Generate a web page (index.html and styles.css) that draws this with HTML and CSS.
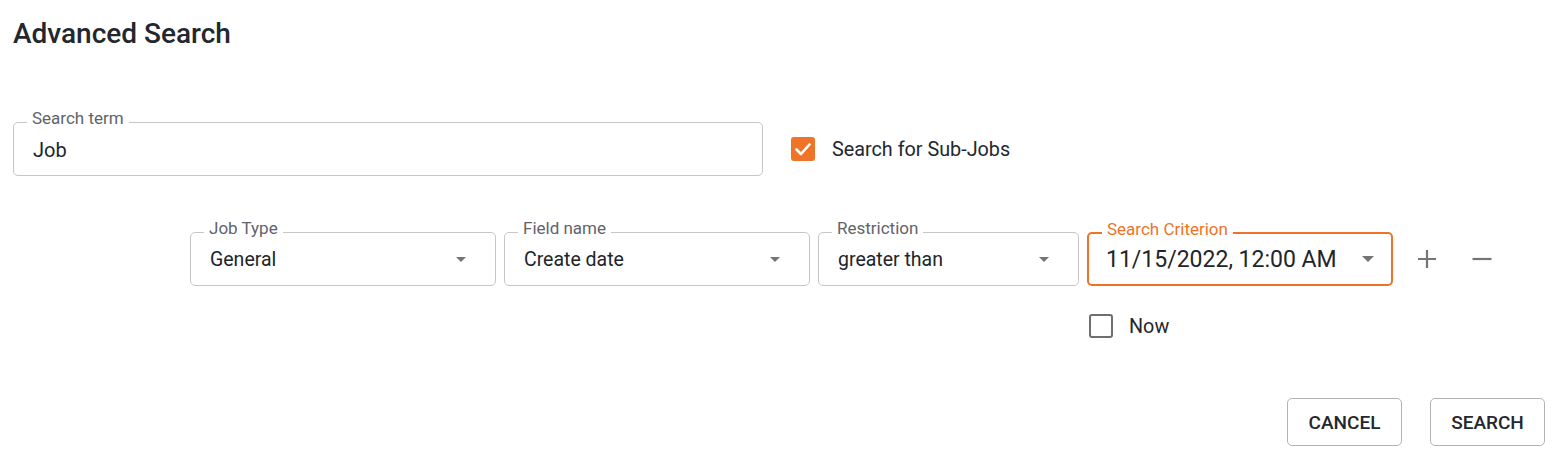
FILE: index.html
```html
<!DOCTYPE html>
<html lang="en">
<head>
<meta charset="utf-8">
<title>Advanced Search</title>
<link rel="stylesheet" href="styles.css">
</head>
<body>
<div class="page">
  <h1 class="title">Advanced Search</h1>

  <div class="search-row">
    <div class="field field-term">
      <span class="field-label">Search term</span>
      <span class="field-value value-term">Job</span>
    </div>
    <label class="check">
      <span class="box box-checked">
        <svg viewBox="0 0 24 24" width="24" height="24"><polyline points="5.5,12.5 10,17 18.5,7.5" fill="none" stroke="#fff" stroke-width="2.6" stroke-linecap="round" stroke-linejoin="round"/></svg>
      </span>
      <span class="check-text">Search for Sub-Jobs</span>
    </label>
  </div>

  <div class="criteria-row">
    <div class="field field-select w305">
      <span class="field-label">Job Type</span>
      <span class="field-value">General</span>
      <span class="arrow"></span>
    </div>
    <div class="field field-select w305">
      <span class="field-label">Field name</span>
      <span class="field-value">Create date</span>
      <span class="arrow"></span>
    </div>
    <div class="field field-select w260">
      <span class="field-label">Restriction</span>
      <span class="field-value">greater than</span>
      <span class="arrow"></span>
    </div>
    <div class="criterion-col">
      <div class="field field-select field-focused w305">
        <span class="field-label label-focused">Search Criterion</span>
        <span class="field-value value-date">11/15/2022, 12:00 AM</span>
        <span class="arrow arrow-big"></span>
      </div>
      <label class="check check-now">
        <span class="box box-empty"></span>
        <span class="check-text">Now</span>
      </label>
    </div>
    <button class="icon-btn icon-plus" type="button" aria-label="Add">
      <svg viewBox="0 0 20 20" width="20" height="20"><path d="M10 1v18M1 10h18" stroke="#757575" stroke-width="2.2" fill="none"/></svg>
    </button>
    <button class="icon-btn" type="button" aria-label="Remove">
      <svg viewBox="0 0 20 20" width="20" height="20"><path d="M0.5 10h19" stroke="#757575" stroke-width="2.2" fill="none"/></svg>
    </button>
  </div>

  <div class="actions">
    <button class="btn" type="button">CANCEL</button>
    <button class="btn" type="button">SEARCH</button>
  </div>
</div>
</body>
</html>
```

FILE: styles.css
```css
* { box-sizing: border-box; }

body {
  margin: 0;
  background: #ffffff;
  font-family: Roboto, "Liberation Sans", Arial, sans-serif;
  color: #212529;
}

.page {
  padding: 18px 12px 0 13px;
}

.title {
  margin: 0;
  font-size: 28px;
  line-height: 32px;
  font-weight: 500;
  color: #23272e;
}

.search-row {
  margin-top: 72px;
  display: flex;
  align-items: center;
}

.field {
  position: relative;
  height: 54px;
  border: 1px solid #c6c6c6;
  border-radius: 5px;
  display: flex;
  align-items: center;
  padding-left: 19px;
}

.field-term { width: 750px; }
.w305 { width: 306px; }
.w260 { width: 261px; }

.field-label {
  position: absolute;
  left: 13px;
  top: -14px;
  padding: 0 5px;
  background: #ffffff;
  font-size: 17px;
  line-height: 18px;
  color: #5f636b;
  white-space: nowrap;
}

.label-focused { color: #ee7326; }

.field-value {
  font-size: 19.5px;
  line-height: 24px;
  padding-top: 2px;
  color: #212529;
  white-space: nowrap;
}

.value-term { font-size: 20px; }
.value-date { font-size: 23px; }

.field-focused {
  border: 2px solid #ee7326;
  padding-left: 17px;
}

.arrow {
  position: absolute;
  right: 29px;
  top: 50%;
  margin-top: -2px;
  width: 0;
  height: 0;
  border-left: 5.5px solid transparent;
  border-right: 5.5px solid transparent;
  border-top: 5.5px solid #757575;
}

.arrow-big {
  right: 17px;
  margin-top: -3px;
  border-left-width: 6px;
  border-right-width: 6px;
  border-top-width: 6px;
}

.check {
  display: flex;
  align-items: center;
  gap: 17px;
  margin-left: 28px;
}

.box {
  width: 24px;
  height: 24px;
  border-radius: 3px;
  display: block;
}

.box svg { display: block; }

.box-checked { background: #ef7428; }

.box-empty { border: 2px solid #6f6f6f; }

.check-text {
  font-size: 19.8px;
  line-height: 24px;
  padding-top: 2px;
  color: #23272e;
}

.criteria-row {
  margin-top: 56px;
  margin-left: 177px;
  display: flex;
  align-items: flex-start;
  gap: 8px;
}

.criterion-col {
  display: flex;
  flex-direction: column;
}

.check-now {
  margin-top: 27px;
  margin-left: 2px;
  gap: 16px;
}

.icon-btn {
  width: 40px;
  height: 54px;
  border: 0;
  background: transparent;
  padding: 0;
  display: flex;
  align-items: center;
  justify-content: center;
  margin-left: 7px;
}

.icon-btn svg { display: block; }

.icon-plus { margin-left: 6px; }

.actions {
  margin-top: 59px;
  display: flex;
  justify-content: flex-end;
  gap: 28px;
}

.btn {
  height: 48px;
  width: 115px;
  border: 1px solid #b3b3b3;
  border-radius: 5px;
  background: #ffffff;
  font-family: Roboto, "Liberation Sans", Arial, sans-serif;
  font-size: 19px;
  font-weight: 500;
  color: #23272e;
  padding: 0;
}
```
